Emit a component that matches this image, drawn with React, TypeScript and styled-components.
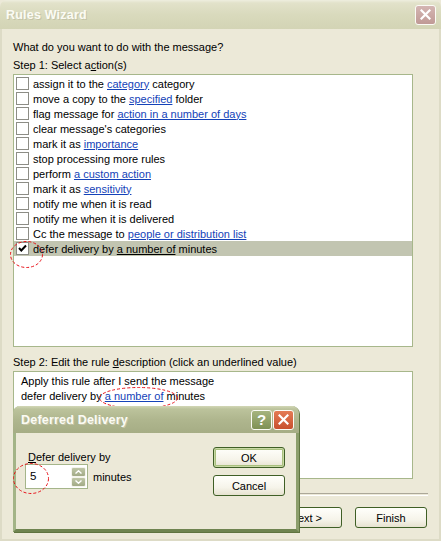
import React from 'react';
import styled, { createGlobalStyle } from 'styled-components';

const Global = createGlobalStyle`
  html, body { margin: 0; padding: 0; background: #ece9d8; }
  body { font-family: "Liberation Sans", Arial, sans-serif; font-size: 11px; color: #000; }
  #root { width: 441px; height: 541px; }
`;

const Window = styled.div`
  position: relative;
  width: 441px;
  height: 541px;
  box-sizing: border-box;
  background: #ece9d8;
  display: flex;
  flex-direction: column;
  overflow: hidden;
`;

const TitleBar = styled.div`
  height: 29px;
  flex: none;
  display: flex;
  align-items: center;
  justify-content: space-between;
  padding: 0 5px 0 6px;
  border-radius: 7px 7px 0 0;
  background: linear-gradient(180deg, #eeeedf 0px, #e2e2ca 3px, #d9dabd 50%, #d3d4b5 100%);
`;

const TitleText = styled.span`
  font-family: "Liberation Sans", Arial, sans-serif;
  font-weight: bold;
  font-size: 12.5px;
  color: #fbfbf4;
  text-shadow: 1px 1px 0 #c4c4a8;
  letter-spacing: 0.2px;
`;

const CaptionButton = styled.div<{ $tone: 'inactive' | 'help' | 'close' }>`
  width: 21px;
  height: 20px;
  box-sizing: border-box;
  border: 1px solid #fbfbf6;
  border-radius: 3px;
  display: flex;
  align-items: center;
  justify-content: center;
  color: #fff;
  font-weight: bold;
  font-size: 15px;
  background: ${p =>
    p.$tone === 'inactive'
      ? 'linear-gradient(180deg, #d4b5b2, #c09a96)'
      : p.$tone === 'help'
      ? 'linear-gradient(180deg, #a6b47f, #7f9155)'
      : 'linear-gradient(180deg, #e47b55, #c8502e)'};
`;

const CaptionGroup = styled.div`
  display: flex;
  gap: 1px;
`;

const Body = styled.div`
  flex: 1;
  display: flex;
  flex-direction: column;
  padding: 12px 11px 0 11px;
  border-left: 2px solid #dddbc6;
  border-right: 2px solid #dddbc6;
  border-bottom: 2px solid #dddbc6;
`;

const Label = styled.div<{ $mt?: number }>`
  line-height: 13px;
  height: 13px;
  margin-top: ${p => p.$mt ?? 0}px;
  white-space: nowrap;
`;

const Acc = styled.span`
  text-decoration: underline;
`;

const ListBox = styled.div`
  margin-top: 2px;
  width: 400px;
  height: 273px;
  box-sizing: border-box;
  background: #fff;
  border: 1px solid #a7b78b;
  padding: 1px 0;
`;

const Row = styled.div<{ $selected?: boolean }>`
  height: 15px;
  display: flex;
  align-items: center;
  gap: 4px;
  padding-left: 2px;
  white-space: nowrap;
  background: ${p => (p.$selected ? '#c2c5b1' : 'transparent')};
`;

const CheckBox = styled.div`
  width: 13px;
  height: 13px;
  box-sizing: border-box;
  border: 1px solid #8d8d86;
  background: #fff;
  display: flex;
  align-items: center;
  justify-content: center;
  flex: none;
`;

const Link = styled.span<{ $plain?: boolean }>`
  color: ${p => (p.$plain ? '#000' : '#1442b8')};
  text-decoration: underline;
`;

const DescBox = styled.div`
  margin-top: 2px;
  width: 400px;
  height: 108px;
  box-sizing: border-box;
  background: #fff;
  border: 1px solid #a7b78b;
  padding: 2px 7px;
  line-height: 15px;
`;

const Separator = styled.div`
  margin-top: 14px;
  height: 1px;
  border-top: 1px solid #aca899;
  border-bottom: 1px solid #fff;
`;

const ButtonRow = styled.div`
  margin-top: 11px;
  display: flex;
  justify-content: flex-end;
  padding-right: 1px;
`;

const Button = styled.div<{ $default?: boolean; $gap?: number }>`
  width: 72px;
  height: 21px;
  box-sizing: border-box;
  margin-left: ${p => p.$gap ?? 0}px;
  border: 1px solid #3f5f26;
  border-radius: 3px;
  background: linear-gradient(180deg, #fffffb 0%, #f6f4ea 60%, #e6e2d0 100%);
  display: flex;
  align-items: center;
  justify-content: center;
  box-shadow: ${p => (p.$default ? 'inset 0 0 0 1px #c9d9a5, inset 0 0 0 2px #a8c07e' : 'none')};
`;

const Dialog = styled.div`
  position: absolute;
  left: 13px;
  top: 406px;
  width: 286px;
  height: 126px;
  box-sizing: border-box;
  display: flex;
  flex-direction: column;
  background: #ece9d8;
  border: 3px solid #a3b487;
  border-top: 0;
  border-right-color: #8c9e6c;
  border-bottom-color: #6f8450;
  border-radius: 7px 7px 0 0;
  box-shadow: 1px 1px 0 #5f7440;
`;

const DialogTitle = styled.div`
  height: 27px;
  flex: none;
  margin: 0 -3px;
  padding: 0 5px 0 8px;
  border-radius: 7px 7px 0 0;
  display: flex;
  align-items: center;
  justify-content: space-between;
  background: linear-gradient(180deg, #d2d7b6 0px, #bcc39c 3px, #afb68e 50%, #a6ad85 100%);
`;

const DialogBody = styled.div`
  flex: 1;
  display: flex;
  justify-content: space-between;
  padding: 14px 11px 0 9px;
`;

const DialogLeft = styled.div`
  display: flex;
  flex-direction: column;
`;

const DialogLabel = styled.div`
  margin: 4px 0 0 3px;
  line-height: 13px;
`;

const SpinRow = styled.div`
  display: flex;
  align-items: center;
  gap: 5px;
`;

const SpinField = styled.div`
  width: 63px;
  height: 25px;
  box-sizing: border-box;
  border: 1px solid #a5b58a;
  background: #fff;
  display: flex;
  align-items: flex-end;
  justify-content: space-between;
  padding: 0 1px 0 4px;
`;

const SpinValue = styled.span`
  align-self: center;
  font-size: 11.5px;
  margin-top: -2px;
`;

const SpinButtons = styled.div`
  display: flex;
  flex-direction: column;
  width: 15px;
  margin-bottom: 1px;
`;

const SpinButton = styled.div`
  height: 10px;
  box-sizing: border-box;
  border: 1px solid #f4f4ec;
  border-radius: 2px;
  background: linear-gradient(180deg, #bfc6a6, #a2aa86);
  display: flex;
  align-items: center;
  justify-content: center;
`;

const DialogButtons = styled.div`
  display: flex;
  flex-direction: column;
  gap: 7px;
`;

const Mark = styled.svg<{ $x: number; $y: number }>`
  position: absolute;
  left: ${p => p.$x}px;
  top: ${p => p.$y}px;
  overflow: visible;
  pointer-events: none;
`;

type Seg = string | { link: string };

const actions: Seg[][] = [
  ['assign it to the ', { link: 'category' }, ' category'],
  ['move a copy to the ', { link: 'specified' }, ' folder'],
  ['flag message for ', { link: 'action in a number of days' }],
  ["clear message's categories"],
  ['mark it as ', { link: 'importance' }],
  ['stop processing more rules'],
  ['perform ', { link: 'a custom action' }],
  ['mark it as ', { link: 'sensitivity' }],
  ['notify me when it is read'],
  ['notify me when it is delivered'],
  ['Cc the message to ', { link: 'people or distribution list' }],
  ['defer delivery by ', { link: 'a number of' }, ' minutes'],
];

const CrossIcon = ({ size = 11 }: { size?: number }) => (
  <svg width={size} height={size} viewBox="0 0 11 11">
    <path d="M1.5 1.5 L9.5 9.5 M9.5 1.5 L1.5 9.5" stroke="#fff" strokeWidth="2.2" strokeLinecap="square" />
  </svg>
);

const Check = () => (
  <svg width="9" height="9" viewBox="0 0 9 9">
    <path d="M1 4 L3.3 6.5 L8 1.5" stroke="#000" strokeWidth="2" fill="none" />
  </svg>
);

const Chevron = ({ up }: { up?: boolean }) => (
  <svg width="7" height="4" viewBox="0 0 7 4">
    <path d={up ? 'M0.5 3.5 L3.5 0.8 L6.5 3.5' : 'M0.5 0.5 L3.5 3.2 L6.5 0.5'} stroke="#fff" strokeWidth="1.4" fill="none" />
  </svg>
);

const Ellipse = ({ x, y, w, h }: { x: number; y: number; w: number; h: number }) => (
  <Mark $x={x} $y={y} width={w} height={h} viewBox={`0 0 ${w} ${h}`}>
    <ellipse cx={w / 2} cy={h / 2} rx={w / 2 - 0.5} ry={h / 2 - 0.5} fill="none" stroke="#e8141b" strokeWidth="1" strokeDasharray="3 2" />
  </Mark>
);

export default function App() {
  return (
    <>
      <Global />
      <Window>
        <TitleBar>
          <TitleText>Rules Wizard</TitleText>
          <CaptionButton $tone="inactive">
            <CrossIcon />
          </CaptionButton>
        </TitleBar>
        <Body>
          <Label>What do you want to do with the message?</Label>
          <Label $mt={5}>
            Step 1: Select a<Acc>c</Acc>tion(s)
          </Label>
          <ListBox>
            {actions.map((segs, i) => {
              const selected = i === actions.length - 1;
              return (
                <Row key={i} $selected={selected}>
                  <CheckBox>{selected && <Check />}</CheckBox>
                  <span>
                    {segs.map((s, j) =>
                      typeof s === 'string' ? (
                        <React.Fragment key={j}>{s}</React.Fragment>
                      ) : (
                        <Link key={j} $plain={selected}>
                          {s.link}
                        </Link>
                      )
                    )}
                  </span>
                </Row>
              );
            })}
          </ListBox>
          <Label $mt={9}>
            Step 2: Edit the rule <Acc>d</Acc>escription (click an underlined value)
          </Label>
          <DescBox>
            <div>Apply this rule after I send the message</div>
            <div>
              defer delivery by <Link>a number of</Link> minutes
            </div>
          </DescBox>
          <Separator />
          <ButtonRow>
            <Button>&lt; <Acc>B</Acc>ack</Button>
            <Button>
              <Acc>N</Acc>ext &gt;
            </Button>
            <Button $gap={13}>Finish</Button>
          </ButtonRow>
        </Body>
        <Ellipse x={10} y={241} w={33} h={27} />
        <Ellipse x={99} y={387} w={79} h={22} />
        <Dialog>
          <DialogTitle>
            <TitleText>Deferred Delivery</TitleText>
            <CaptionGroup>
              <CaptionButton $tone="help">?</CaptionButton>
              <CaptionButton $tone="close">
                <CrossIcon />
              </CaptionButton>
            </CaptionGroup>
          </DialogTitle>
          <DialogBody>
            <DialogLeft>
              <DialogLabel>
                <Acc>D</Acc>efer delivery by
              </DialogLabel>
              <SpinRow>
                <SpinField>
                  <SpinValue>5</SpinValue>
                  <SpinButtons>
                    <SpinButton>
                      <Chevron up />
                    </SpinButton>
                    <SpinButton>
                      <Chevron />
                    </SpinButton>
                  </SpinButtons>
                </SpinField>
                <span>minutes</span>
              </SpinRow>
            </DialogLeft>
            <DialogButtons>
              <Button $default>OK</Button>
              <Button>Cancel</Button>
            </DialogButtons>
          </DialogBody>
        </Dialog>
        <Ellipse x={13} y={463} w={36} h={31} />
      </Window>
    </>
  );
}
